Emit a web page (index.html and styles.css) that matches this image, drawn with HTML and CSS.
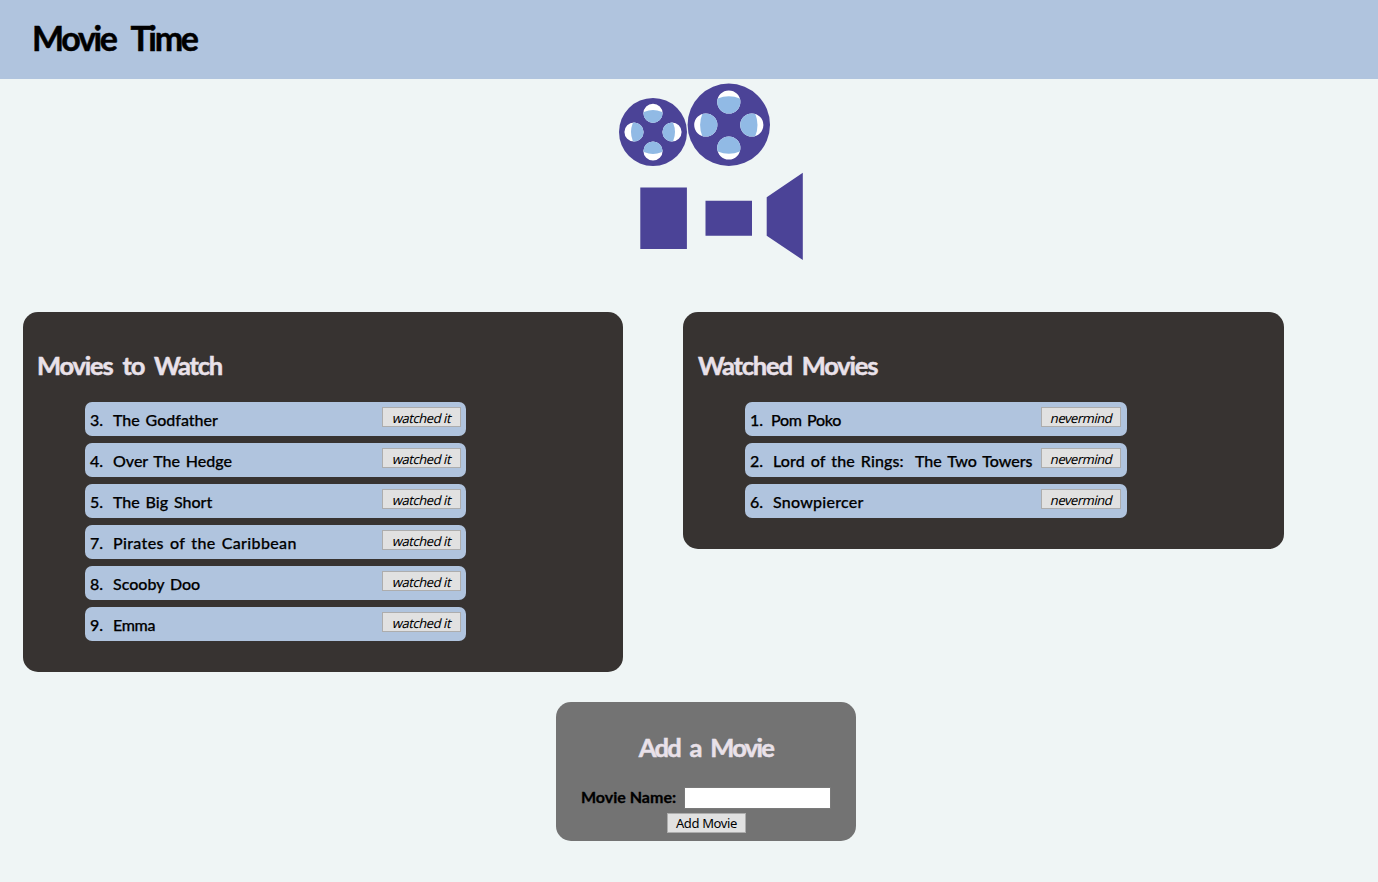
FILE: index.html
```html
<!DOCTYPE html>
<html lang="en">
<head>
<meta charset="utf-8">
<title>Movie Time</title>
<link rel="stylesheet" href="styles.css">
</head>
<body>
<header class="banner"><h1 class="title">Movie Time</h1></header>
<svg class="camera" viewBox="616 80 190 184" width="190" height="184" aria-hidden="true">
  <defs>
    <clipPath id="small-holes"><circle cx="653" cy="113.3" r="9.6"/><circle cx="653" cy="151" r="9.6"/><circle cx="634" cy="132" r="9.6"/><circle cx="672" cy="132" r="9.6"/></clipPath>
    <clipPath id="big-holes"><circle cx="728.8" cy="102" r="11.6"/><circle cx="728.8" cy="148" r="11.6"/><circle cx="705.8" cy="125" r="11.6"/><circle cx="751.8" cy="125" r="11.6"/></clipPath>
  </defs>
  <g fill="#4b4397">
    <circle cx="653" cy="132" r="34"/>
    <circle cx="728.8" cy="124.8" r="41.2"/>
    <path d="M640.3 187.5h46.6V249h-46.6zM705.5 200.7H752v35.1h-46.5zM766.7 197.2L802.8 172.7V260L766.7 235.7z"/>
  </g>
  <g clip-path="url(#small-holes)"><path fill="#fff" d="M616 95h72v72h-72z"/><circle cx="653" cy="132" r="22" fill="#91bae5"/></g>
  <g clip-path="url(#big-holes)"><path fill="#fff" d="M687 83h84v84h-84z"/><circle cx="728.8" cy="125" r="28.7" fill="#91bae5"/></g>
</svg>
<main class="lists">
  <section class="panel">
    <h2 class="heading">Movies to Watch</h2>
    <ul class="movies">
      <li class="movie"><span class="num">3.</span><span class="name">The Godfather</span><button class="btn mark"><span class="slant">watched it</span></button></li>
      <li class="movie"><span class="num">4.</span><span class="name">Over The Hedge</span><button class="btn mark"><span class="slant">watched it</span></button></li>
      <li class="movie"><span class="num">5.</span><span class="name">The Big Short</span><button class="btn mark"><span class="slant">watched it</span></button></li>
      <li class="movie"><span class="num">7.</span><span class="name wide">Pirates of the Caribbean</span><button class="btn mark"><span class="slant">watched it</span></button></li>
      <li class="movie"><span class="num">8.</span><span class="name">Scooby Doo</span><button class="btn mark"><span class="slant">watched it</span></button></li>
      <li class="movie"><span class="num">9.</span><span class="name tight">Emma</span><button class="btn mark"><span class="slant">watched it</span></button></li>
    </ul>
  </section>
  <section class="panel seen">
    <h2 class="heading">Watched Movies</h2>
    <ul class="movies">
      <li class="movie"><span class="num first">1.</span><span class="name tight">Pom Poko</span><button class="btn mark"><span class="slant">nevermind</span></button></li>
      <li class="movie"><span class="num">2.</span><span class="name"><span class="series">Lord of the Rings:&nbsp;</span> The Two Towers</span><button class="btn mark"><span class="slant">nevermind</span></button></li>
      <li class="movie"><span class="num">6.</span><span class="name loose">Snowpiercer</span><button class="btn mark"><span class="slant">nevermind</span></button></li>
    </ul>
  </section>
</main>
<form class="add">
  <h2 class="heading">Add a Movie</h2>
  <div class="field"><label class="label" for="movie-name">Movie Name:</label><input class="input" id="movie-name" type="text"></div>
  <button class="btn submit" type="button">Add Movie</button>
</form>
</body>
</html>
```
FILE: styles.css
```css
* { box-sizing: border-box; }
body {
  margin: 0;
  min-height: 882px;
  background: #eff5f5;
  font-family: Lato, "Noto Sans", sans-serif;
  color: #000;
}
.banner { height: 79px; padding: 16px 32px; background: #b0c4de; }
.title { margin: 0; font-size: 34px; line-height: 44px; letter-spacing: -2.35px; word-spacing: 10px; -webkit-text-stroke: 0.5px #000; }
.camera { display: block; margin: 1px 0 0 616px; }
.lists { display: flex; align-items: flex-start; gap: 60px; margin: 48px 0 0 23px; }
.panel { width: 600px; padding: 37px 14px 31px; border-radius: 15px; background: #373331; }
.seen { width: 601px; padding-left: 15px; }
.heading { margin: 0; color: #e9e1e9; font-size: 25.5px; line-height: 32px; letter-spacing: -1.2px; word-spacing: 5px; white-space: nowrap; -webkit-text-stroke: 0.5px #e9e1e9; }
.movies { display: flex; flex-direction: column; gap: 7px; list-style: none; width: 381px; margin: 21px 0 0 48px; padding: 0; }
.seen .movies { width: 382px; margin-left: 47px; }
.movie { display: flex; align-items: flex-start; height: 34px; padding: 5px; border-radius: 7px; background: #b0c4de; font-size: 16px; line-height: 26px; font-weight: 500; -webkit-text-stroke: 0.25px #000; }
.num { flex: none; width: 23px; }
.first { width: 21px; }
.name { flex: 1; white-space: nowrap; word-spacing: 1.8px; }
.wide { letter-spacing: 0.36px; }
.loose { letter-spacing: 0.25px; }
.tight { letter-spacing: -0.35px; }
.series { letter-spacing: 0.12px; }
.btn { flex: none; width: 79px; height: 20px; padding: 0; border: 1px solid #adadad; background: #e1e1e1; color: #000; font: 13px/18px "Noto Sans", sans-serif; letter-spacing: -0.5px; white-space: nowrap; -webkit-text-stroke: 0; }
.mark { padding: 1px 0 0 1px; }
.slant { display: inline-block; transform: skewX(-13deg); }
.seen .btn { width: 80px; margin-right: 1px; }
.add { width: 300px; height: 139px; margin: 30px 0 0 556px; padding-top: 29px; border-radius: 15px; background: #737373; text-align: center; }
.add .heading { letter-spacing: -1.7px; }
.field { display: flex; align-items: center; margin: 24px 0 0 25px; gap: 8px; }
.label { width: 95px; padding-bottom: 2px; font-size: 16px; line-height: 20px; font-weight: 700; text-align: left; white-space: nowrap; -webkit-text-stroke: 0.3px #000; }
.input { width: 147px; height: 22px; padding: 1px 2px; border: 1px solid #7a7a7a; background: #fff; }
.submit { display: block; margin: 4px auto 0; padding-left: 1px; letter-spacing: -0.35px; }
```
